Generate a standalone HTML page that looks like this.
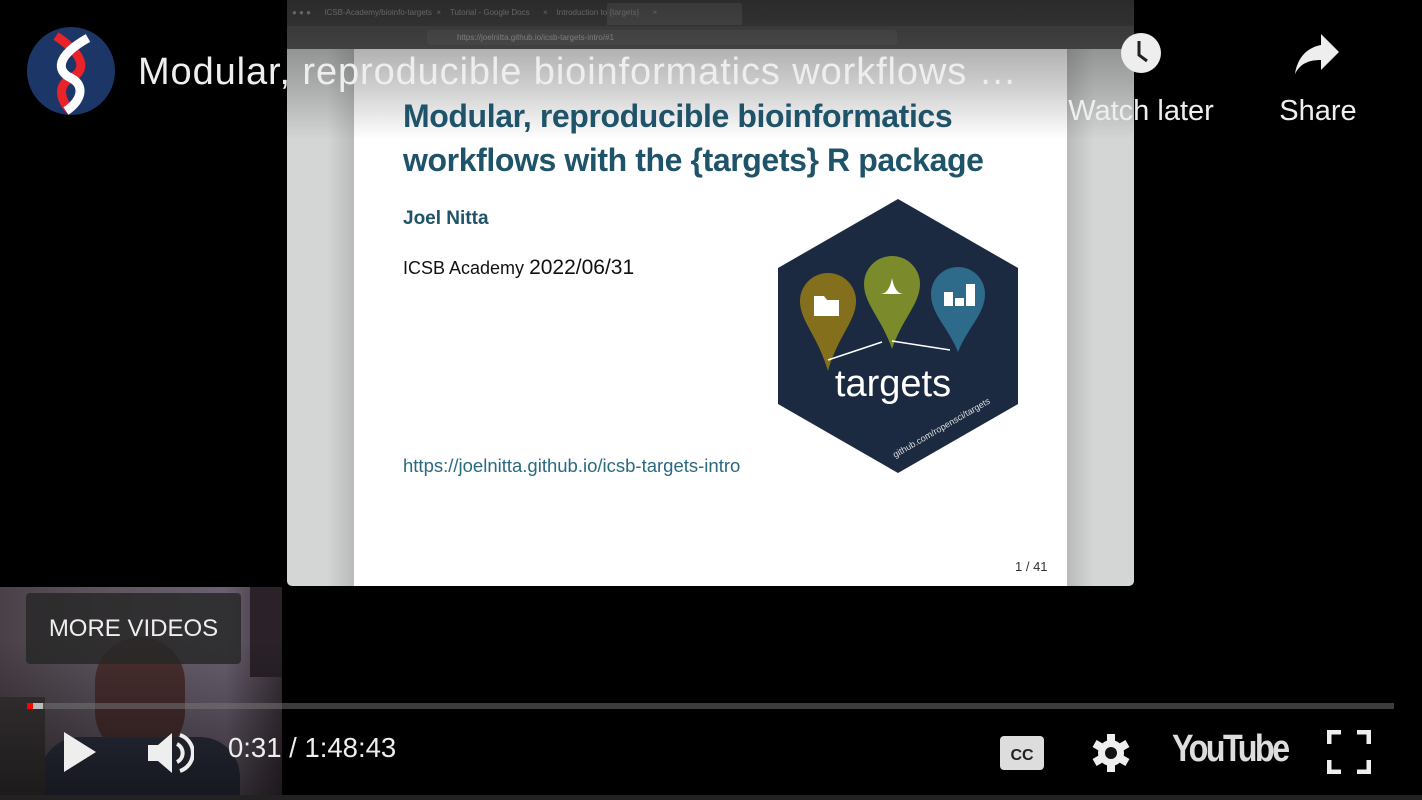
<!DOCTYPE html>
<html><head><meta charset="utf-8"><style>
body{margin:0;width:1422px;height:800px;background:#000;overflow:hidden;position:relative;font-family:"Liberation Sans",sans-serif}
.abs{position:absolute}
</style></head><body>
<!-- video frame -->
<div class="abs" style="left:287px;top:0;width:847px;height:586px;background:#d3d6d4;border-radius:0 0 5px 5px;overflow:hidden">
  <div class="abs" style="left:0;top:0;width:847px;height:26px;background:#4e4e4e"></div>
  <div class="abs" style="left:320px;top:3px;width:135px;height:22px;background:#666;border-radius:3px 3px 0 0"></div>
  <div class="abs" style="left:0;top:26px;width:847px;height:23px;background:#5c5c5c"></div>
  <div class="abs" style="left:140px;top:30px;width:470px;height:15px;background:#666;border-radius:4px"></div>
  <div class="abs" style="left:67px;top:49px;width:713px;height:537px;background:#fff"></div>
  <div class="abs" style="left:40px;top:49px;width:27px;height:537px;background:linear-gradient(90deg,#d3d6d4,#b9bbba)"></div>
  <div class="abs" style="left:780px;top:49px;width:27px;height:537px;background:linear-gradient(90deg,#b9bbba,#d3d6d4)"></div>
  <div class="abs" style="left:5px;top:8px;font-size:8px;color:#aaa;white-space:nowrap">● ● ●&nbsp;&nbsp;&nbsp;&nbsp;&nbsp;&nbsp;ICSB-Academy/bioinfo-targets&nbsp;&nbsp;×&nbsp;&nbsp;&nbsp;&nbsp;Tutorial - Google Docs&nbsp;&nbsp;&nbsp;&nbsp;&nbsp;&nbsp;×&nbsp;&nbsp;&nbsp;&nbsp;Introduction to {targets}&nbsp;&nbsp;&nbsp;&nbsp;&nbsp;&nbsp;×</div>
  <div class="abs" style="left:170px;top:33px;font-size:8px;color:#bbb">https://joelnitta.github.io/icsb-targets-intro/#1</div>
</div>
<!-- top gradient overlay -->
<div class="abs" style="left:0;top:0;width:1422px;height:140px;background:linear-gradient(180deg,rgba(0,0,0,.45),rgba(0,0,0,.2) 60%,rgba(0,0,0,0))"></div>
<!-- slide text -->
<div class="abs" style="left:403px;top:94px;font-size:32px;line-height:44px;color:#1f5369;font-weight:bold;letter-spacing:-0.4px">Modular, reproducible bioinformatics<br>workflows with the {targets} R package</div>
<div class="abs" style="left:403px;top:208px;font-size:19px;color:#1f5369;font-weight:bold">Joel Nitta</div>
<div class="abs" style="left:403px;top:256px;font-size:18px;color:#111">ICSB Academy <span style="font-size:21px">2022/06/31</span></div>
<div class="abs" style="left:403px;top:455px;font-size:18.5px;color:#2a6a80">https://joelnitta.github.io/icsb-targets-intro</div>
<div class="abs" style="left:1015px;top:559px;font-size:13px;color:#333">1 / 41</div>
<!-- hex logo -->
<svg class="abs" style="left:770px;top:196px" width="256" height="280" viewBox="0 0 256 280">
  <polygon points="128,3 248,72 248,208 128,277 8,208 8,72" fill="#1b2a40"/>
  <path d="M30,115 a28,28 0 1,1 56,0 c0,20 -18,35 -28,70 c-10,-35 -28,-50 -28,-70z" fill="#84701c" transform="translate(0,-10)"/>
  <path d="M94,92 a28,28 0 1,1 56,0 c0,20 -18,35 -28,65 c-10,-30 -28,-45 -28,-65z" fill="#7b8a2a" transform="translate(0,-4)"/>
  <path d="M161,110 a27,27 0 1,1 54,0 c0,20 -17,33 -27,58 c-10,-25 -27,-38 -27,-58z" fill="#2e6a8a" transform="translate(0,-12)"/>
  <path d="M44,100 h10 l3,4 h12 v16 h-25z" fill="#fff"/>
  <path d="M110,98 c6,0 10,-5 12,-16 c2,11 6,16 12,16z" fill="#fff"/>
  <rect x="174" y="96" width="9" height="14" fill="#fff"/><rect x="185" y="102" width="9" height="8" fill="#fff"/><rect x="196" y="88" width="9" height="22" fill="#fff"/>
  <path d="M58,164 L112,146 M122,145 L180,154" stroke="#fff" stroke-width="1.5"/>
  <text x="123" y="200" text-anchor="middle" font-size="38" fill="#fff" font-family="Liberation Sans">targets</text>
  <text x="0" y="0" font-size="9" fill="#ddd" transform="translate(125,262) rotate(-30)">github.com/ropensci/targets</text>
</svg>
<!-- channel logo -->
<svg class="abs" style="left:26px;top:26px" width="90" height="90" viewBox="0 0 90 90">
  <circle cx="45" cy="45" r="44" fill="#1d3668"/>
  <path d="M30,10 C60,30 60,45 45,52 C30,60 35,75 45,85" stroke="#e8232a" stroke-width="9" fill="none"/>
  <path d="M62,12 C30,30 30,45 45,52 C60,60 55,75 40,85" stroke="#fff" stroke-width="9" fill="none"/>
</svg>
<div class="abs" style="left:138px;top:51px;font-size:38px;color:#eee;white-space:nowrap;letter-spacing:0.9px">Modular, reproducible bioinformatics workflows …</div>
<!-- watch later -->
<svg class="abs" style="left:1119px;top:31px" width="44" height="44" viewBox="0 0 44 44"><circle cx="22" cy="22" r="20" fill="#eee"/><path d="M20,10 v14 l8,6" stroke="#222" stroke-width="3" fill="none"/></svg>
<div class="abs" style="left:1053px;top:95px;width:176px;text-align:center;font-size:29px;color:#eee">Watch later</div>
<svg class="abs" style="left:1293px;top:32px" width="48" height="44" viewBox="0 0 48 44"><path d="M28,2 L46,20 L28,38 V28 C15,28 7,32 2,42 C4,28 12,16 28,13z" fill="#eee"/></svg>
<div class="abs" style="left:1262px;top:95px;width:112px;text-align:center;font-size:29px;color:#eee">Share</div>
<!-- webcam -->
<div class="abs" style="left:0;top:587px;width:282px;height:208px;background:linear-gradient(90deg,#4a4048,#5f5660 40%,#6a6070 80%,#3a3038);overflow:hidden">
  <div class="abs" style="left:250px;top:0;width:32px;height:90px;background:#2a2228"></div>
  <div class="abs" style="left:95px;top:50px;width:90px;height:120px;border-radius:45px;background:#4a2f30"></div>
  <div class="abs" style="left:40px;top:150px;width:200px;height:70px;border-radius:40px 40px 0 0;background:#2d3040"></div>
  <div class="abs" style="left:0;top:110px;width:45px;height:100px;background:#3a3536"></div>
</div>
<div class="abs" style="left:0;top:795px;width:1422px;height:5px;background:#222"></div>
<!-- bottom gradient -->
<div class="abs" style="left:0;top:640px;width:1422px;height:155px;background:linear-gradient(180deg,rgba(0,0,0,0),rgba(0,0,0,.5))"></div>
<!-- more videos -->
<div class="abs" style="left:26px;top:593px;width:215px;height:71px;background:rgba(40,40,40,.85);border-radius:4px;color:#eee;font-size:24px;line-height:71px;text-align:center">MORE VIDEOS</div>
<!-- progress -->
<div class="abs" style="left:27px;top:703px;width:1367px;height:6px;background:rgba(120,120,120,.5)"></div>
<div class="abs" style="left:27px;top:703px;width:6px;height:6px;background:#f00"></div>
<div class="abs" style="left:33px;top:703px;width:10px;height:6px;background:#bbb"></div>
<!-- controls -->
<svg class="abs" style="left:62px;top:730px" width="36" height="44"><path d="M2,2 L34,22 L2,42z" fill="#eee"/></svg>
<svg class="abs" style="left:146px;top:730px" width="48" height="46" viewBox="0 0 48 46"><path d="M2,15 h10 l14,-12 v40 l-14,-12 h-10z" fill="#eee"/><path d="M31,14 a10,10 0 0,1 0,18" stroke="#eee" stroke-width="4" fill="none"/><path d="M34,5 a19,19 0 0,1 0,36" stroke="#eee" stroke-width="4" fill="none"/></svg>
<div class="abs" style="left:228px;top:732px;font-size:27.5px;color:#eee;white-space:nowrap">0:31 / 1:48:43</div>
<svg class="abs" style="left:999px;top:735px" width="46" height="36"><rect x="1" y="1" width="44" height="34" rx="4" fill="#ddd"/><text x="23" y="25" text-anchor="middle" font-size="16" font-weight="bold" fill="#222" font-family="Liberation Sans">CC</text></svg>
<svg class="abs" style="left:1090px;top:732px" width="42" height="42" viewBox="0 0 42 42"><g fill="#eee"><circle cx="21" cy="21" r="13"/><rect x="17" y="2" width="8" height="38"/><rect x="17" y="2" width="8" height="38" transform="rotate(60 21 21)"/><rect x="17" y="2" width="8" height="38" transform="rotate(120 21 21)"/></g><circle cx="21" cy="21" r="6" fill="#111"/></svg>
<div class="abs" style="left:1172px;top:728px;font-size:38px;color:#ddd;font-weight:bold;letter-spacing:-3px;transform:scaleX(.85);transform-origin:left">YouTube</div>
<svg class="abs" style="left:1327px;top:730px" width="44" height="44" viewBox="0 0 44 44"><path d="M2,14 V2 H14 M30,2 H42 V14 M42,30 V42 H30 M14,42 H2 V30" stroke="#eee" stroke-width="5" fill="none"/></svg>
</body></html>
